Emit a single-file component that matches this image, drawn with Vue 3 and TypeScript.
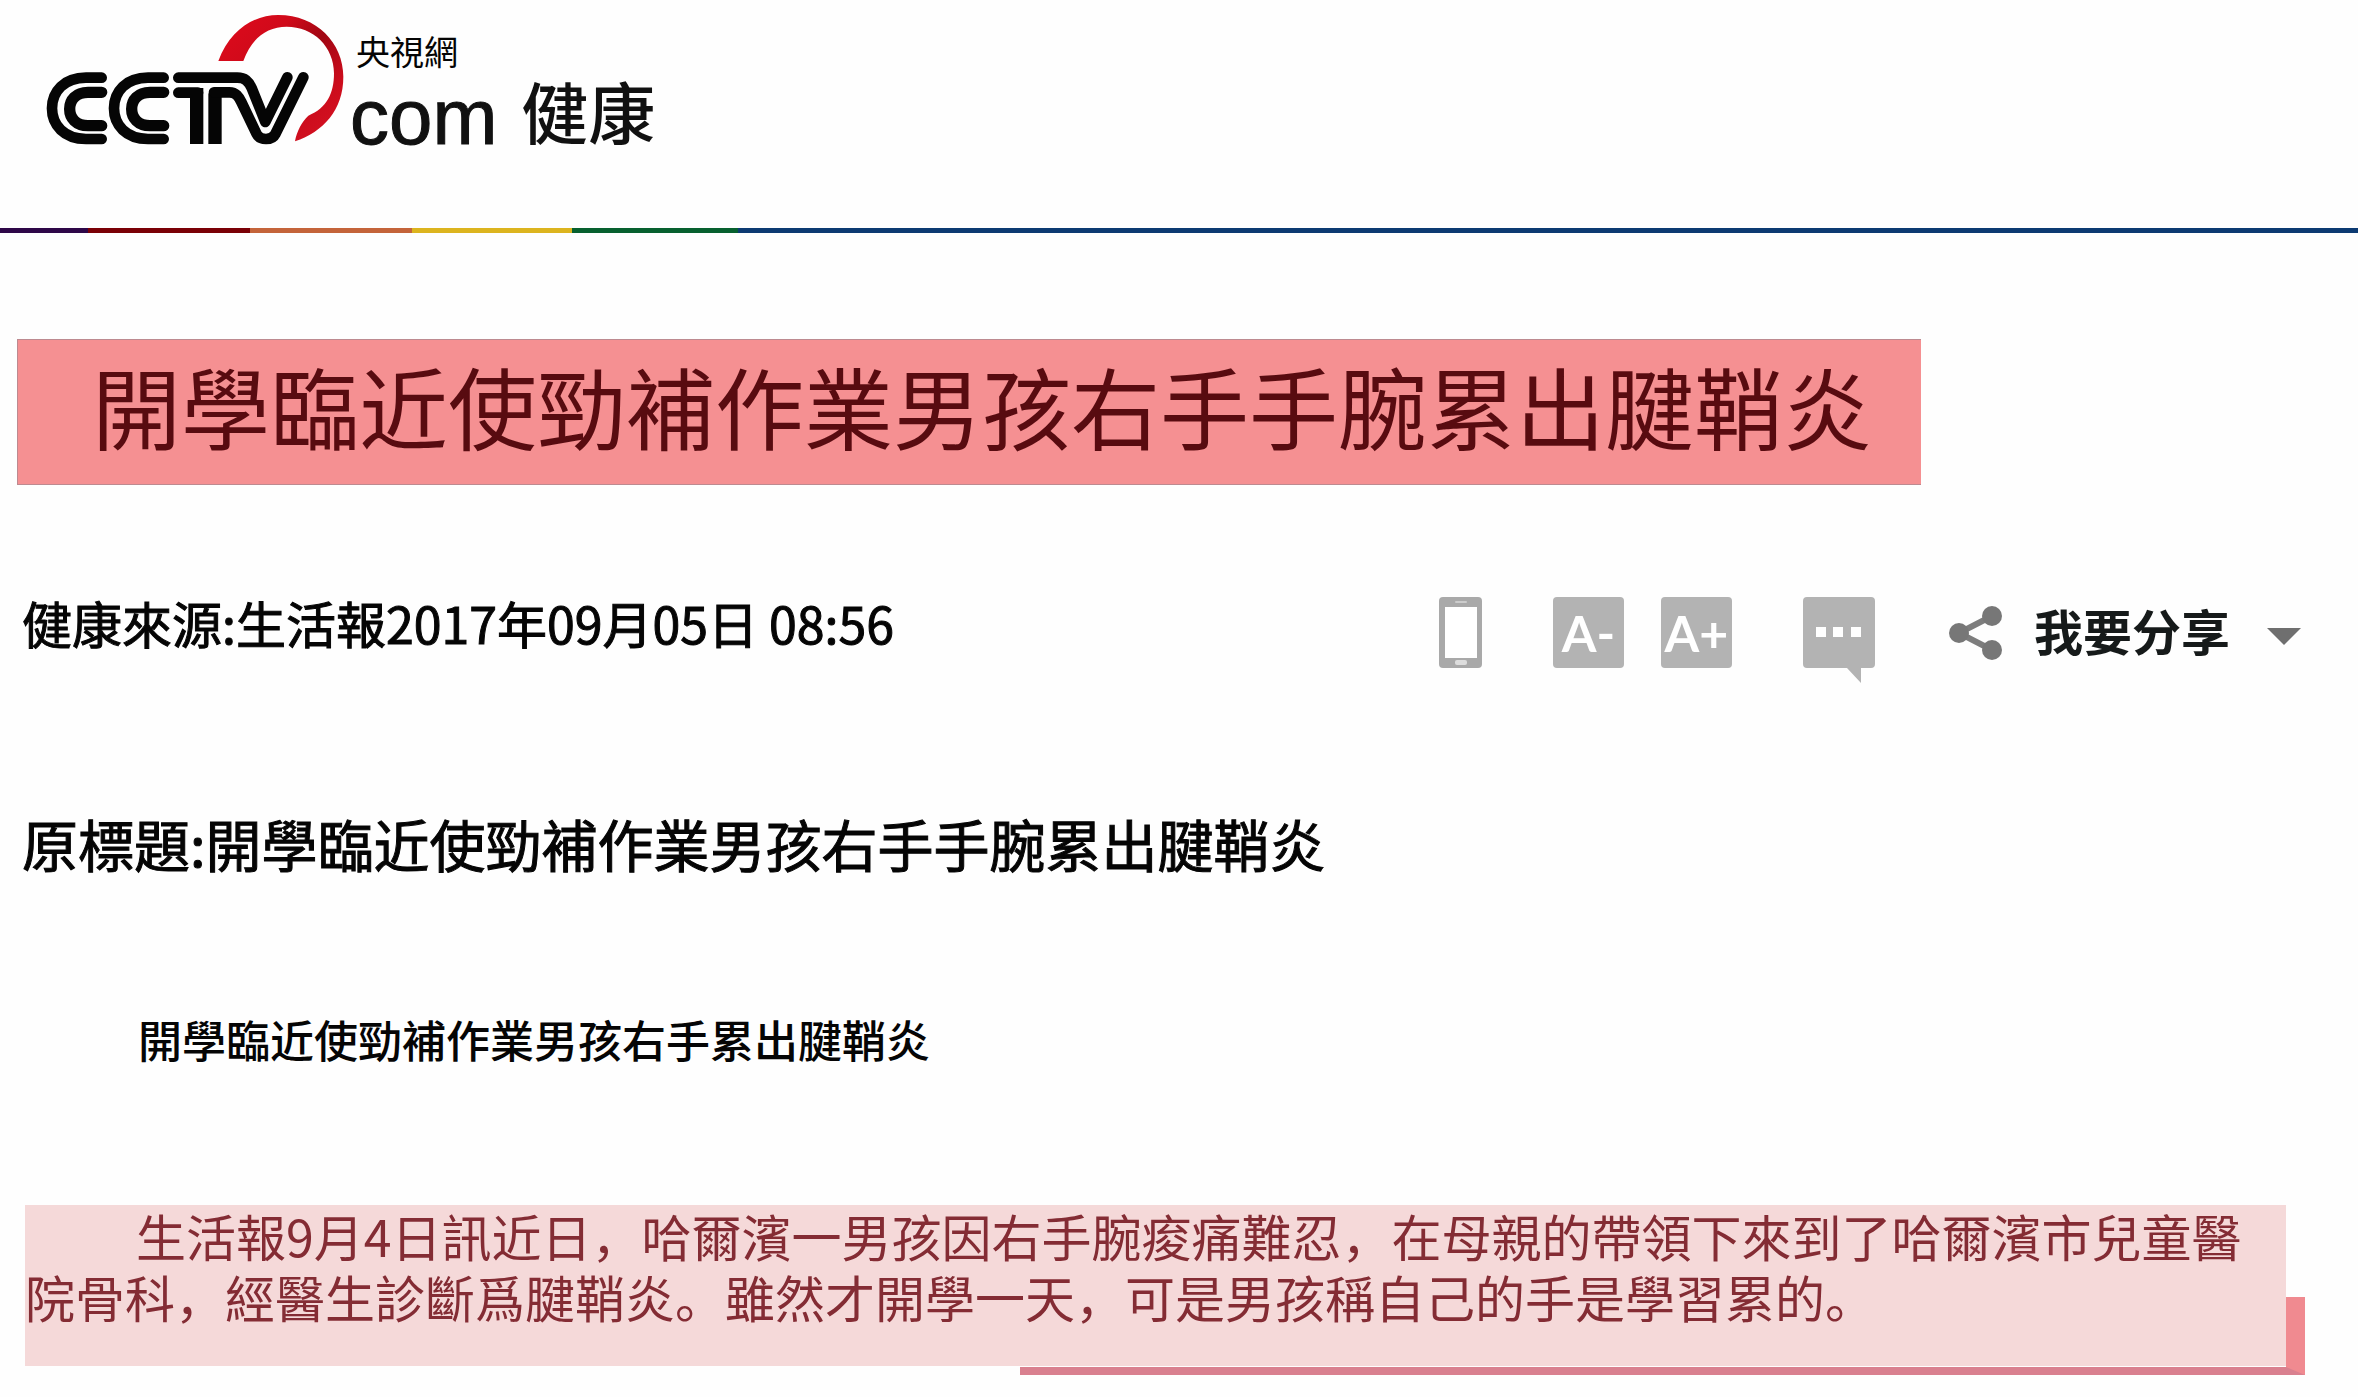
<script setup lang="ts">
const headline: string = '開學臨近使勁補作業男孩右手手腕累出腱鞘炎'
const subtitle: string = '開學臨近使勁補作業男孩右手累出腱鞘炎'
const source: string = '健康來源:生活報2017年09月05日 08:56'
const body: string =
  '生活報9月4日訊近日，哈爾濱一男孩因右手腕痠痛難忍，在母親的帶領下來到了哈爾濱市兒童醫院骨科，經醫生診斷爲腱鞘炎。雖然才開學一天，可是男孩稱自己的手是學習累的。'
</script>

<template>
  <div class="page">
    <header class="header">
      <a class="brand" href="#" aria-label="CCTV.com">
        <svg class="mark" viewBox="0 0 960 450" aria-hidden="true">
          <defs>
            <linearGradient id="swoosh" x1="0" y1="0" x2="1" y2="1">
              <stop offset="0" stop-color="#e00a1c" />
              <stop offset="0.3" stop-color="#d00a1a" />
              <stop offset="0.5" stop-color="#a00612" />
              <stop offset="0.75" stop-color="#cc0c1c" />
              <stop offset="1" stop-color="#d81424" />
            </linearGradient>
          </defs>
          <g fill="none" stroke="#050505" stroke-width="32" stroke-linecap="round" stroke-linejoin="round">
            <path d="M215 233H168C102 233 66 275 66 325S102 417 168 417H215" />
            <path stroke-width="34" d="M215 277H174C138 277 119 300 119 327S138 377 174 377H215" />
            <path d="M401 233H354C288 233 252 275 252 325S288 417 354 417H401" />
            <path stroke-width="34" d="M401 277H360C324 277 305 300 305 327S324 377 360 377H401" />
            <path d="M445 233H622C645 233 655 243 665 264L706 366L772 232" />
            <path stroke-width="32" d="M445 278H504" />
            <path stroke-width="40" stroke-linecap="butt" d="M500 264V432" />
            <path stroke-width="40" stroke-linecap="butt" d="M555 432V280" />
            <path d="M552 277H598C618 277 626 290 634 306L680 402C690 422 726 422 736 402L820 232" />
          </g>
          <path
            fill="url(#swoosh)"
            d="M565 183C600 90 670 45 745 45C860 45 940 130 940 230C940 330 880 395 795 424C800 395 815 365 835 347C890 325 912 280 912 220C912 140 850 80 770 80C710 80 665 115 640 183Z"
          />
        </svg>
        <span class="brand-text">
          <span class="brand-cn">央視網</span>
          <span class="brand-com">com</span>
        </span>
      </a>
      <a class="channel" href="#">健康</a>
    </header>
    <div class="stripe"></div>

    <main>
      <h1 class="headline">{{ headline }}</h1>

      <div class="info">
        <p class="source">{{ source }}</p>
        <div class="tools">
          <button class="tool phone" type="button" aria-label="手機">
            <svg viewBox="0 0 43 71" aria-hidden="true">
              <rect width="43" height="71" rx="4" fill="#a9a9a9" />
              <rect x="6" y="10" width="32" height="51" fill="#fff" />
              <rect x="16" y="4" width="12" height="2" rx="1" fill="#ccc" />
              <rect x="16" y="63" width="12" height="5" rx="2" fill="#ddd" />
            </svg>
          </button>
          <button class="tool size smaller" type="button">A-</button>
          <button class="tool size" type="button">A+</button>
          <button class="tool chat" type="button" aria-label="評論">
            <svg viewBox="0 0 72 87" aria-hidden="true">
              <path d="M4 0H68Q72 0 72 4V67Q72 71 68 71H58V86L44 71H4Q0 71 0 67V4Q0 0 4 0Z" fill="#b3b3b3" />
              <path d="M13 30h10v10h-10zM30 30h10v10h-10zM48 30h10v10h-10z" fill="#fff" />
            </svg>
          </button>
          <button class="share" type="button">
            <svg class="share-icon" viewBox="0 0 53 54" aria-hidden="true">
              <path d="M43 10L10 27L43 44" fill="none" stroke="#7d7d7d" stroke-width="6" />
              <g fill="#777">
                <circle cx="43" cy="10" r="10" />
                <circle cx="10" cy="27" r="10" />
                <circle cx="43" cy="44" r="10" />
              </g>
            </svg>
            <span class="share-label">我要分享</span>
            <svg class="arrow" viewBox="0 0 34 24" aria-hidden="true">
              <path d="M0 7H34L17 24Z" fill="#6f6f6f" />
            </svg>
          </button>
        </div>
      </div>

      <p class="original">原標題:{{ headline }}</p>
      <h2 class="subtitle">{{ subtitle }}</h2>
      <p class="body">{{ body }}</p>
    </main>
  </div>
</template>

<style>
body {
  margin: 0;
  background: #fefefe;
}
</style>

<style scoped>
.page {
  font-family: "Noto Sans CJK SC", "Noto Sans CJK TC", sans-serif;
  color: #050505;
  padding-bottom: 31px;
}
p,
h1,
h2 {
  margin: 0;
  font-weight: 400;
}
a {
  color: inherit;
  text-decoration: none;
}
button {
  padding: 0;
  border: 0;
  background: none;
  font-family: inherit;
  color: inherit;
  cursor: pointer;
}
svg {
  display: block;
}
.header {
  display: flex;
  align-items: flex-start;
  height: 228px;
  padding-left: 30px;
}
.brand {
  display: flex;
}
.mark {
  width: 320px;
  height: 150px;
}
.brand-text {
  display: flex;
  flex-direction: column;
  padding-top: 28px;
}
.brand-cn {
  padding-left: 6px;
  font-size: 34px;
  line-height: 46px;
}
.brand-com {
  font-family: "Liberation Sans", sans-serif;
  font-size: 78px;
  line-height: 86px;
  color: #111;
  -webkit-text-stroke: 1px #111;
}
.channel {
  padding: 76px 0 0 24px;
  font-size: 67px;
  line-height: 68px;
  font-weight: 500;
  color: #111;
}
.stripe {
  height: 5px;
  background: linear-gradient(
    to right,
    #2e0748 0 88px,
    #7a0006 88px 250px,
    #c4643a 250px 412px,
    #dcb41e 412px 572px,
    #07602f 572px 738px,
    #0c3a72 738px
  );
}
.headline {
  width: fit-content;
  margin: 106px 0 0 17px;
  padding: 0 49px 14px 74px;
  border: solid #bd8a90;
  border-width: 1px 0 1px 1px;
  background: #f59092;
  color: #580b10;
  font-size: 89px;
  line-height: 130px;
}
.info {
  display: flex;
  justify-content: space-between;
  align-items: flex-start;
  margin-top: 112px;
  padding: 0 57px 0 22px;
}
.source,
.original {
  -webkit-text-stroke: 1px #050505;
}
.source {
  font-size: 50px;
  line-height: 50px;
}
.tools {
  display: flex;
  align-items: flex-start;
}
.phone {
  width: 43px;
}
.size {
  width: 71px;
  height: 71px;
  margin-left: 37px;
  border-radius: 4px;
  background: #b3b3b3;
  color: #fff;
  font-family: Lato, sans-serif;
  font-size: 50px;
  line-height: 66px;
  font-weight: 700;
}
.smaller,
.chat {
  margin-left: 71px;
}
.chat {
  width: 72px;
  height: 87px;
}
.share {
  display: flex;
  align-items: center;
  gap: 32px;
  height: 71px;
  margin-left: 74px;
  font-size: 49px;
  line-height: 64px;
  font-weight: 700;
  color: #161a1a;
}
.share-icon {
  width: 53px;
}
.share-label {
  padding: 0 5px 6px 0;
}
.arrow {
  width: 34px;
}
.original {
  margin: 129px 0 0 22px;
  font-size: 56px;
  line-height: 60px;
}
.subtitle {
  margin: 141px 0 0 138px;
  font-size: 44px;
  line-height: 50px;
  font-weight: 500;
}
.body {
  position: relative;
  margin: 141px 72px 0 25px;
  padding: 0 30px 39px 0;
  background: #f5d9d9;
  color: #842c34;
  font-size: 50px;
  line-height: 61px;
  text-indent: 111px;
}
/* Darker plate that shows past the right and bottom edges of the paragraph */
.body::after {
  content: "";
  position: absolute;
  z-index: -1;
  top: 92px;
  right: -19px;
  bottom: -9px;
  left: 44%;
  border: solid #d9808f;
  border-width: 0 19px 8px 0;
  border-right-color: #f08a90;
}
</style>
